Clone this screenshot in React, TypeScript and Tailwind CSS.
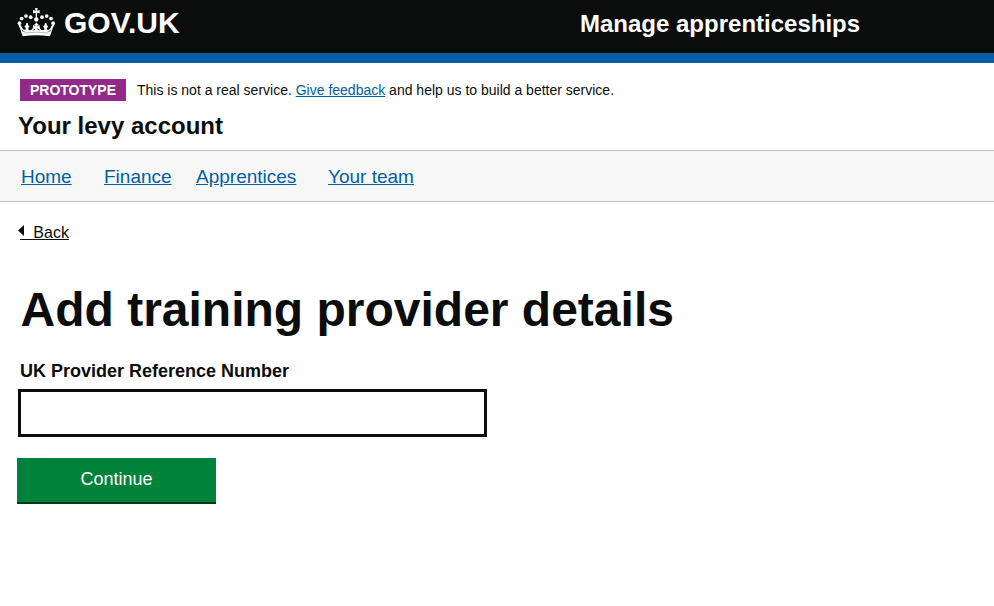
const balls = [
  [22.5, 57.5],
  [29, 43.5],
  [42, 36],
  [56, 39.5],
  [90, 39.5],
  [104, 36],
  [117, 43.5],
  [123.5, 57.5],
];

const links = [
  { label: "Home", width: "w-[83px]" },
  { label: "Finance", width: "w-[92px]" },
  { label: "Apprentices", width: "w-[132px]" },
  { label: "Your team", width: "w-[100px]" },
];

function Crown() {
  return (
    <svg viewBox="0 0 150 114" className="mt-1 -ml-[5px] h-[38px] w-[50px]" fill="currentColor">
      {balls.map(([x, y]) => (
        <circle key={x} cx={x} cy={y} r="5.6" />
      ))}
      {/* top cross and orb */}
      <path d="M69 12h8l-2 8 8-2v10l-8-2v14a6.500 6.500 0 1 1-4 0V26l-8 2V18l8 2z" />
      {/* outer frame and inner arches */}
      <g fill="none" stroke="currentColor">
        <path d="M21 61c4 8 8 18 11 30M125 61c-4 8-8 18-11 30" strokeWidth="4" />
        <path d="M25 64c3 12 11 18 18 14M121 64c-3 12-11 18-18 14M47 78c8 6 16 1 18-8M99 78c-8 6-16 1-18-8" strokeWidth="4" />
        <path d="M45 58v25M101 58v25M73 56v26" strokeWidth="5" />
      </g>
      {/* centre cross and side fleurs */}
      <path d="M66 60h14l-5 7 8-4v14l-8-4 5 9H66l5-9-8 4V63l8 4zM45 56l4 8 4 4-4 3v11h-8V71l-4-3 4-4zM101 56l4 8 4 4-4 3v11h-8V71l-4-3 4-4z" />
      {/* rim */}
      <path d="M29 83q44-8 88 0l-3 14q-41-6-82 0z" />
      <path d="M37 87q36-5 72 0" fill="none" stroke="#0b0c0c" strokeWidth="1.5" opacity="0.55" />
    </svg>
  );
}

function Header() {
  return (
    <header className="flex h-[63px] items-start border-b-10 border-[#005ea5] bg-[#0b0c0c] pl-[17px] font-bold text-white">
      <a href="#" className="flex w-[563px] items-start">
        <Crown />
        <span className="ml-[2px] text-[30px] leading-[46px]">GOV.UK</span>
      </a>
      <span className="text-2xl leading-12">Manage apprenticeships</span>
    </header>
  );
}

export default function App() {
  return (
    <div className="min-h-screen bg-white font-['Liberation_Sans',Arial,sans-serif] text-[#0b0c0c]">
      <Header />
      <div className="flex h-[38px] items-end pl-5 text-sm leading-[22px]">
        <strong className="w-[106px] bg-[#912b88] text-center text-white">PROTOTYPE</strong>
        <p className="ml-[11px] whitespace-nowrap">
          This is not a real service.{" "}
          <a href="#" className="text-[#005ea5] underline">Give feedback</a> and help us to build a better service.
        </p>
      </div>
      <h2 className="h-[49px] pt-[9px] pl-[18px] text-2xl leading-8 font-bold">Your levy account</h2>
      <nav className="flex h-[52px] items-center border-y border-[#bfc1c3] bg-[#f8f8f8] pt-[2px] pl-[21px] text-[19px] leading-6 text-[#005ea5]">
        {links.map((l) => (
          <span key={l.label} className={l.width}>
            <a href="#" className="underline">{l.label}</a>
          </span>
        ))}
      </nav>
      <main className="flex flex-col items-start pt-[21px] pl-[17px]">
        <a href="#" className="flex h-5 text-base leading-5">
          <svg viewBox="0 0 6 11" className="mt-[2px] ml-px h-[11px] w-[6px]" fill="currentColor">
            <path d="M6 0v11L0 5.500z" />
          </svg>
          <span className="-ml-[4px] whitespace-pre underline">{"\u00a0\u00a0\u00a0Back"}</span>
        </a>
        <h1 className="mt-[37px] ml-[3.5px] text-5xl leading-[60px] font-bold">Add training provider details</h1>
        <label htmlFor="ukprn" className="mt-[19px] ml-[3px] text-lg leading-6 font-bold">
          UK Provider Reference Number
        </label>
        <input id="ukprn" type="text" className="mt-[6px] ml-px h-12 w-[469px] border-3 border-[#0b0c0c] bg-white px-2 text-lg outline-none" />
        <button type="button" className="mt-[21px] h-[46px] w-[199px] border-b-2 border-[#003618] bg-[#00823b] pb-[2px] text-lg leading-6 text-white">
          Continue
        </button>
      </main>
    </div>
  );
}
